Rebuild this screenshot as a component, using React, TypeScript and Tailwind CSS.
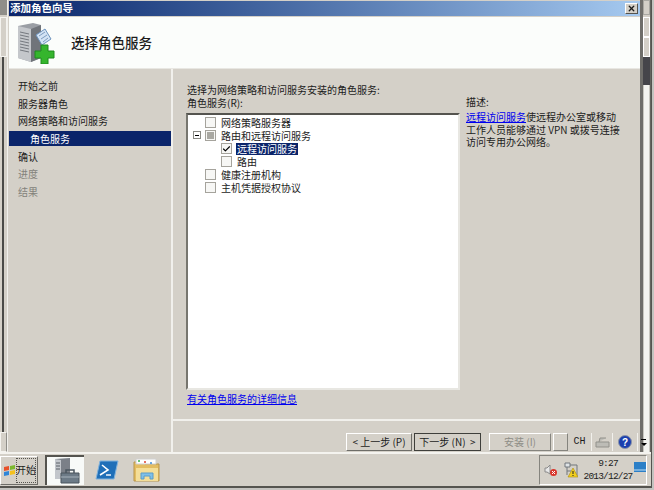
import { Check, X } from "lucide-react";

const navItems = [
  { label: "开始之前", state: "done" },
  { label: "服务器角色", state: "done" },
  { label: "网络策略和访问服务", state: "done" },
  { label: "角色服务", state: "active" },
  { label: "确认", state: "done" },
  { label: "进度", state: "off" },
  { label: "结果", state: "off" },
];

const treeItems = [
  { label: "网络策略服务器", level: 0, mark: "none" },
  { label: "路由和远程访问服务", level: 0, mark: "partial", expander: true },
  { label: "远程访问服务", level: 1, mark: "checked", selected: true },
  { label: "路由", level: 1, mark: "none" },
  { label: "健康注册机构", level: 0, mark: "none" },
  { label: "主机凭据授权协议", level: 0, mark: "none" },
];

function ServerPlusIcon() {
  return (
    <svg width="38" height="42" viewBox="0 0 38 42">
      <path d="M1 4 L16 1 L24 3 L24 36 L14 40 L1 36 Z" fill="#9a9ea4" />
      <path d="M1 4 L14 7 L14 40 L1 36 Z" fill="#c4c7cb" />
      <path d="M14 7 L24 3 L24 36 L14 40 Z" fill="#70747a" />
      <path d="M3 10 L12 12 M3 13 L12 15 M3 16 L12 18 M3 19 L12 21 M3 22 L12 24 M3 25 L12 27 M3 28 L12 30" stroke="#75797f" strokeWidth="1" />
      <path d="M19 13 L28 7 L34 17 L25 23 Z" fill="#d3e3f4" stroke="#6d93bd" />
      <path d="M22 14 L28 10 M24 17 L30 13 M26 20 L31 16" stroke="#7d9cc0" />
      <path d="M24 23 H31 V29 H37 V36 H31 V42 H24 V36 H18 V29 H24 Z" fill="#35b52d" stroke="#1f8a1f" />
    </svg>
  );
}

function StartFlag() {
  return (
    <svg width="13" height="13" viewBox="0 0 13 13" className="shrink-0">
      <path d="M1 3 L6 2 L6 6 L1 7 Z" fill="#e8502a" />
      <path d="M7 2 L12 1 L12 5 L7 6 Z" fill="#7cb82f" />
      <path d="M1 8 L6 7 L6 11 L1 12 Z" fill="#2f86d8" />
      <path d="M7 7 L12 6 L12 10 L7 11 Z" fill="#f4c11e" />
    </svg>
  );
}

function ServerManagerIcon() {
  return (
    <svg width="28" height="26" viewBox="0 0 28 26">
      <path d="M3 1 L18 0 L18 21 L3 21 Z" fill="#7b8088" />
      <path d="M3 1 L9 2 L9 21 L3 21 Z" fill="#c2c6cb" />
      <path d="M4 5 H8 M4 8 H8 M4 11 H8" stroke="#5b6067" />
      <path d="M9 15 H27 V25 H9 Z" fill="#6c7a86" stroke="#4a545d" />
      <path d="M14 15 V12 H22 V15" fill="none" stroke="#4a545d" strokeWidth="1.5" />
      <path d="M9 19 H27" stroke="#a6b1ba" />
    </svg>
  );
}

function PowerShellIcon() {
  return (
    <svg width="24" height="20" viewBox="0 0 24 20">
      <path d="M5 1 H23 L19 19 H1 Z" fill="#1f6fb8" stroke="#7fb2dd" />
      <path d="M7 5 L13 10 L5 15" fill="none" stroke="#fff" strokeWidth="1.6" />
      <path d="M11 15 H16" stroke="#fff" strokeWidth="1.4" />
    </svg>
  );
}

function ExplorerIcon() {
  return (
    <svg width="28" height="24" viewBox="0 0 28 24">
      <path d="M1 4 H10 L12 6 H26 V23 H1 Z" fill="#e3bd62" stroke="#b8954a" />
      <path d="M3 1 H23 V6 H3 Z" fill="#fff" stroke="#d0d0d0" />
      <circle cx="6" cy="3" r="1" fill="#33b249" />
      <circle cx="12" cy="4" r="1" fill="#e0402c" />
      <circle cx="18" cy="5" r="1" fill="#3b8ddb" />
      <path d="M3 10 H25 V23 H3 Z" fill="#f4de98" />
      <path d="M8 21 V15 H20 V21 H17 V18 H11 V21 Z" fill="#7fc0e8" stroke="#5b9cc8" />
    </svg>
  );
}

function SpeakerMuted() {
  return (
    <svg width="14" height="14" viewBox="0 0 14 14" className="shrink-0">
      <path d="M1 5 H3 L6 2 V11 L3 9 H1 Z" fill="#e8e8e8" stroke="#8a8a8a" />
      <circle cx="9.5" cy="9.5" r="3.5" fill="#d9362b" />
      <path d="M8 8 L11 11 M11 8 L8 11" stroke="#fff" />
    </svg>
  );
}

function NetworkWarning() {
  return (
    <svg width="14" height="16" viewBox="0 0 14 16" className="shrink-0">
      <path d="M1 1 H6 V5 H1 Z M3 5 V13 M3 9 H7" fill="#dfe3e6" stroke="#70767c" />
      <path d="M6 3 H13 V14 H6" fill="none" stroke="#70767c" />
      <path d="M9 6 L14 15 H4 Z" fill="#f2cf1d" stroke="#a88a10" strokeWidth="0.6" />
      <path d="M9 9 V12 M9 13 V14" stroke="#222" />
    </svg>
  );
}

function Checkbox({ mark }: { mark: string }) {
  return (
    <span className="w-[11px] h-[11px] shrink-0 flex items-center justify-center border border-[#a5a39c] bg-[#f7f7f5]">
      {mark === "checked" && <Check size={10} strokeWidth={3} className="text-black" />}
      {mark === "partial" && <span className="w-[7px] h-[7px] bg-[#a9a8a2]" />}
    </span>
  );
}

function WizardButton({ label, isDefault, disabled }: { label: string; isDefault?: boolean; disabled?: boolean }) {
  return (
    <div
      className={`h-[18px] flex items-center justify-center whitespace-pre text-[10px] leading-none border ${
        isDefault
          ? "w-[67px] border-[#3f3f3b] text-[#1c1c1c]"
          : disabled
            ? "w-[62px] border-t-white border-l-white border-r-[#85847e] border-b-[#85847e] text-[#8e8d86]"
            : "w-[66px] border-t-white border-l-white border-r-[#6e6d68] border-b-[#6e6d68] text-[#1c1c1c]"
      }`}
    >
      {label}
    </div>
  );
}

export default function App() {
  return (
    <div className="relative w-[654px] h-[490px] flex overflow-hidden bg-[#c4c3bf] font-['Noto_Sans_CJK_SC',sans-serif] text-[#1c1c1c]">
      <div className="w-[651px] shrink-0 flex flex-col bg-[#d4d0c8]">
        <div className="flex h-[452px]">
          {/* Parent window, left edge */}
          <div className="w-[9px] shrink-0 flex">
            <div className="w-[7px] flex flex-col">
              <div className="h-[15px] bg-[#8f8e89]" />
              <div className="h-[2px]" />
              <div className="h-[40px] border border-[#f4f3ef]" />
              <div className="flex-1 ml-[2px] border-l-2 border-[#4a4a47]" />
              <div className="h-[20px] border border-[#f4f3ef] border-r-[#8f8e89]" />
            </div>
            <div className="w-[2px] border-l border-[#f1f0ec]" />
          </div>

          {/* Wizard window */}
          <div className="w-[631px] shrink-0 flex flex-col">
            <div className="h-[15px] mt-[1px] pl-[1px] pr-[2px] flex items-center justify-between bg-gradient-to-r from-[#0a246a] to-[#a6caf0]">
              <span className="text-[10.5px] font-bold text-white leading-none">添加角色向导</span>
              <span className="w-[13px] h-[11px] flex items-center justify-center bg-[#d4d0c8] border border-t-white border-l-white border-r-[#55544f] border-b-[#55544f]">
                <X size={9} strokeWidth={3.5} />
              </span>
            </div>

            <div className="h-[52px] flex items-center bg-[#fbfdfb] border-b border-[#e8e7e2] pl-[8px] mt-[1px]">
              <ServerPlusIcon />
              <span className="ml-[16px] text-[13.5px] font-medium leading-none">选择角色服务</span>
            </div>

            <div className="flex-1 flex min-h-0">
              {/* Steps */}
              <div className="w-[164px] shrink-0 pt-[8px] border-r-2 border-[#f1f0ec]">
                {navItems.map((item) => (
                  <div
                    key={item.label}
                    className={`flex items-center text-[10px] leading-none ${
                      item.state === "active"
                        ? "h-[15px] my-[1.35px] pl-[21px] bg-[#0a246a] text-white"
                        : item.state === "off"
                          ? "h-[17.7px] pl-[9px] text-[#83827b]"
                          : "h-[17.7px] pl-[9px]"
                    }`}
                  >
                    {item.label}
                  </div>
                ))}
              </div>

              {/* Content */}
              <div className="flex-1 flex flex-col min-w-0">
                <div className="h-[352px] flex border-b-2 border-[#f1f0ec] pl-[13px] pt-[14px]">
                  <div className="w-[280px] shrink-0 flex flex-col">
                    <div className="pl-[1px] text-[10px] leading-[13px]">选择为网络策略和访问服务安装的角色服务:</div>
                    <div className="pl-[1px] text-[10px] leading-[13px]">角色服务(R):</div>
                    <div className="mt-[4px] w-[274px] h-[277px] pt-[1px] bg-white border-2 border-t-[#55544f] border-l-[#77766f] border-r-[#e8e7e2] border-b-[#e8e7e2]">
                      {treeItems.map((row) => (
                        <div
                          key={row.label}
                          className={`relative h-[13px] flex items-center gap-[4px] ${row.level === 1 ? "pl-[33px]" : "pl-[17px]"}`}
                        >
                          <Checkbox mark={row.mark} />
                          <span
                            className={`text-[10px] leading-[12px] px-[1px] ${row.selected ? "bg-[#0a246a] text-white" : ""}`}
                          >
                            {row.label}
                          </span>
                          {row.expander && (
                            <span className="absolute left-[5px] top-[2px] w-[8px] h-[8px] border border-[#8a8a84] bg-white flex items-center justify-center">
                              <span className="w-[4px] h-[1px] bg-black" />
                            </span>
                          )}
                        </div>
                      ))}
                    </div>
                    <div className="mt-[2px] pl-[1px] text-[10px] leading-[13px] text-[#0000ee] underline">有关角色服务的详细信息</div>
                  </div>
                  <div className="w-[158px] shrink-0 pt-[12px]">
                    <div className="text-[10px] leading-[13px]">描述:</div>
                    <div className="mt-[3px] text-[10px] leading-[12.5px]">
                      <span className="text-[#0000ee] underline">远程访问服务</span>使远程办公室或移动工作人员能够通过 VPN 或拨号连接访问专用办公网络。
                    </div>
                  </div>
                </div>
                <div className="flex-1 flex items-start pt-[12px] pl-[173px] gap-[2px]">
                  <WizardButton label="< 上一步 (P)" />
                  <WizardButton label="下一步 (N)  >" isDefault />
                  <div className="w-[4px]" />
                  <WizardButton label="安装 (I)" disabled />
                </div>
              </div>
            </div>
          </div>

          {/* Parent window, right edge */}
          <div className="w-[11px] shrink-0 flex">
            <div className="w-[3px] bg-[#6f6e6a]" />
            <div className="w-[7px] flex flex-col">
              <div className="h-[15px] border border-[#a9a8a2]" />
              <div className="h-[20px] mt-[2px] border border-white" />
              <div className="h-[20px] border border-white" />
              <div className="h-[28px] bg-[#45454a]" />
              <div className="flex-1 bg-[#f4f4f0] border-x border-[#c8c7c0]" />
            </div>
            <div className="w-[1px] bg-[#65645f]" />
          </div>
        </div>

        {/* Taskbar */}
        <div className="h-[34px] flex items-center justify-between pr-[4px] border-t-2 border-[#f4f3ef]">
          <div className="flex items-center">
            <div className="w-[38px] h-[29px] flex items-center pl-[2px] border border-r-[#6e6d68] border-b-[#6e6d68] border-t-white border-l-white">
              <StartFlag />
              <span className="w-[20px] h-[25px] text-[10px] leading-none whitespace-nowrap border border-dotted border-[#55544f] flex items-center justify-center">开始</span>
            </div>
            <div className="ml-[7px] w-[39px] h-[30px] flex items-center justify-center bg-[#f8faf8] border-t-2 border-l-2 border-[#55544f]">
              <ServerManagerIcon />
            </div>
            <div className="ml-[10px] w-[26px] flex justify-center">
              <PowerShellIcon />
            </div>
            <div className="ml-[13px]">
              <ExplorerIcon />
            </div>
          </div>
          <div className="w-[108px] h-[30px] flex items-center pl-[4px] border border-t-[#85847e] border-l-[#85847e] border-r-white border-b-white">
            <SpeakerMuted />
            <span className="w-[6px] shrink-0" />
            <NetworkWarning />
            <div className="ml-[5px] w-[50px] shrink-0 text-[9.5px] leading-[13px] text-center font-['Liberation_Mono',monospace] tracking-[-0.8px]">
              <div>9:27</div>
              <div>2013/12/27</div>
            </div>
            <svg width="12" height="10" viewBox="0 0 12 10" className="ml-[1px] mb-[6px] shrink-0">
              <rect width="12" height="10" fill="#2b7fc7" />
              <path d="M0 8 H12" stroke="#bfe0f5" />
            </svg>
          </div>
        </div>
        <div className="h-[2px] bg-[#55544f]" />
        <div className="h-[2px] bg-[#c4c3bf]" />
      </div>
      <div className="flex-1 flex flex-col">
        <div className="h-[488px] w-[1px] bg-[#55544f]" />
      </div>

      {/* Language bar, floating over the window */}
      <div className="absolute left-[553px] top-[433px] h-[18px] flex items-center gap-[3px] text-[10px]">
        <div className="w-[15px] h-[18px] border border-t-white border-l-white border-r-[#85847e] border-b-[#85847e]" />
        <div className="w-[17px] text-center font-['Liberation_Mono',monospace] leading-none">CH</div>
        <div className="w-[22px] h-[18px] flex items-center justify-center border-x border-[#f1f0ec]">
          <svg width="15" height="12" viewBox="0 0 15 12">
            <path d="M1 6 H14 V11 H1 Z M4 6 L5 2 H11" fill="#bdbcb6" stroke="#92918b" />
          </svg>
        </div>
        <div className="w-[18px] flex justify-center">
          <svg width="14" height="14" viewBox="0 0 14 14">
            <circle cx="7" cy="7" r="6.5" fill="#1b3fae" stroke="#8a93a8" />
            <text x="7" y="10.5" textAnchor="middle" fontSize="10" fontWeight="700" fill="#fff" fontFamily="Liberation Sans">?</text>
          </svg>
        </div>
        <div className="w-[12px] h-[18px] flex flex-col items-center justify-center gap-[3px] border-l border-[#f1f0ec]">
          <span className="w-[5px] h-[1px] bg-black" />
          <span className="w-0 h-0 border-x-[3px] border-t-[3px] border-x-transparent border-t-black" />
        </div>
      </div>
    </div>
  );
}
